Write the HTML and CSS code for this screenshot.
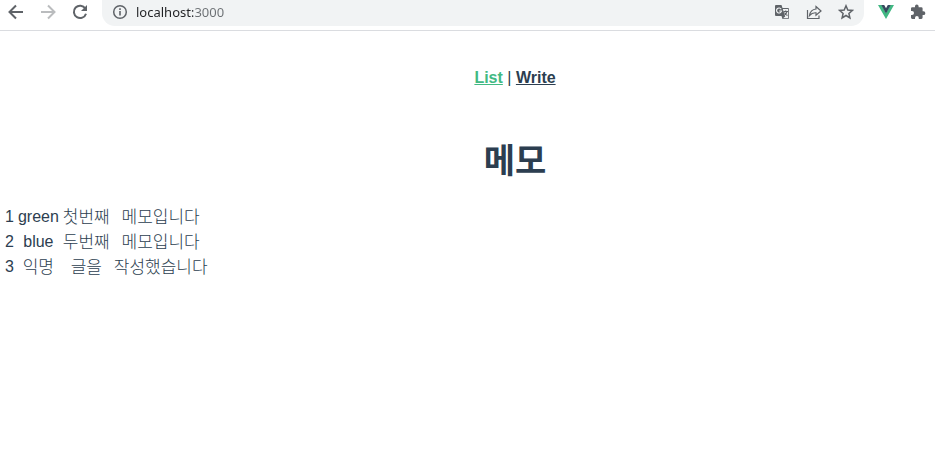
FILE: index.html
```html
<!DOCTYPE html>
<html lang="ko">
<head>
<meta charset="utf-8">
<title>메모</title>
<link rel="stylesheet" href="styles.css">
</head>
<body>
<header class="toolbar">
  <button class="tool" aria-label="Back"><svg viewBox="0 0 16 16"><path class="line" d="M15 8H2M8 1.500L1.500 8L8 14.500"/></svg></button>
  <button class="tool faded" aria-label="Forward"><svg viewBox="0 0 16 16"><path class="line" d="M1 8H14M8 1.500L14.500 8L8 14.500"/></svg></button>
  <button class="tool" aria-label="Reload"><svg viewBox="0 0 16 16"><path class="line" d="M13.300 4.500A6.200 6.200 0 1 0 14 9.700"/><path d="M15 1V7H9Z"/></svg></button>
  <div class="address">
    <button class="tool info" aria-label="Site information"><svg viewBox="0 0 16 16"><circle class="thin" cx="8" cy="8" r="6.300"/><path d="M7.200 7h1.600v4.500H7.200zM7.200 4.300h1.600v1.600H7.200z"/></svg></button>
    <input class="url" type="text" aria-label="Address" value="localhost:3000">
    <button class="tool" aria-label="Translate"><svg viewBox="0 0 16 16"><path d="M2 1h5.500l1 3H14q1 0 1 1v9q0 1-1 1H8.500l-1-3H2q-1 0-1-1V2q0-1 1-1zM8.800 5l2.400 7.500L9 14.200h5.200V5z" fill-rule="evenodd"/><path class="cut" d="M7.200 5.200A2.500 2.500 0 1 0 7.500 7H5.200"/><path class="hair" d="M9.500 7.500H14M11.700 6.500v1M13 7.500Q12.500 10 10.500 11M10.500 8.500Q11.500 10.500 13.500 11.500"/></svg></button>
    <button class="tool" aria-label="Share"><svg viewBox="0 0 16 16"><path class="hair" d="M1.500 6V14.500H13V11.500M10 2.500L15 7L10 11.200V8.800Q6 8.500 3.500 11.500Q4.500 5.500 10 5Z"/></svg></button>
    <button class="tool" aria-label="Bookmark"><svg viewBox="0 0 16 16"><path class="thin" d="M8 1.800L9.800 6L14.300 6.400L10.900 9.400L11.900 13.900L8 11.500L4.100 13.900L5.100 9.400L1.700 6.400L6.200 6Z"/></svg></button>
  </div>
  <button class="tool" aria-label="Vue devtools"><svg viewBox="0 0 16 16"><path class="vue" d="M0 1H3.500L8 9L12.500 1H16L8 15Z"/><path class="navy" d="M3.200 1H6.200L8 4.200L9.800 1H12.800L8 9.500Z"/></svg></button>
  <button class="tool" aria-label="Extensions"><svg viewBox="0 0 16 16"><path d="M13.500 7.300H12.600V4.500q0-1.300-1.300-1.300H8.600V2.300a1.800 1.800 0 0 0-3.600 0V3.200H2.300Q1 3.200 1 4.500V7H2a2 2 0 0 1 0 4H1v2.600Q1 15 2.300 15H5v-1a1.900 1.900 0 0 1 3.800 0v1h2.500q1.300 0 1.300-1.400V11h.9a1.800 1.800 0 0 0 0-3.700z"/></svg></button>
</header>
<div class="app">
  <nav class="nav"><a class="active" href="#list">List</a> | <a href="#write">Write</a></nav>
  <main>
    <h1>메모</h1>
    <table class="memos">
      <tbody>
        <tr><td>1</td><td>green</td><td class="korean">첫번째</td><td class="korean">메모입니다</td></tr>
        <tr><td>2</td><td>blue</td><td class="korean">두번째</td><td class="korean">메모입니다</td></tr>
        <tr><td>3</td><td class="korean">익명</td><td class="korean">글을</td><td class="korean">작성했습니다</td></tr>
      </tbody>
    </table>
  </main>
</div>
</body>
</html>
```
FILE: styles.css
```css
* { box-sizing: border-box; }

body {
  margin: 0;
  background: #fff;
  color: #2c3e50;
  font: 16px/18px "Liberation Sans", "Noto Sans CJK KR", sans-serif;
}

.toolbar {
  display: flex;
  align-items: flex-start;
  gap: 16px;
  height: 31px;
  padding: 0 9px 0 8px;
  border-bottom: 1px solid #dadce0;
}

.tool {
  flex: none;
  width: 16px;
  height: 16px;
  margin: 4px 0 0;
  padding: 0;
  border: 0;
  background: none;
  color: #5f6368;
}

.tool svg { display: block; width: 16px; height: 16px; fill: currentColor; }
.tool .line, .tool .thin, .tool .hair { fill: none; stroke: currentColor; stroke-width: 2; }
.tool .thin { stroke-width: 1.5; }
.tool .hair { stroke-width: 1.2; }
.tool .cut { fill: none; stroke: #f1f3f4; stroke-width: 1.2; }
.tool .vue { fill: #41b883; }
.tool .navy { fill: #35495e; }
.tool.faded { color: #babcbe; }

.address {
  display: flex;
  flex: 1;
  gap: 16px;
  height: 26px;
  margin: 0 -2px;
  padding: 0 10px;
  border-radius: 0 0 13px 13px;
  background: #f1f3f4;
}

.info { margin-right: -8px; }

.url {
  flex: 1;
  min-width: 0;
  height: 24px;
  padding: 0;
  border: 0;
  outline: 0;
  background: linear-gradient(90deg, #202124 57px, #6b6f73 57px);
  background-clip: text;
  color: transparent;
  font: 13px/24px "Noto Sans", sans-serif;
}

.nav, h1 { padding-left: 95px; text-align: center; }

.nav { padding-top: 38px; padding-bottom: 30px; }
.nav a { color: #2c3e50; font-weight: bold; }
.nav .active { color: #42b983; }

h1 { margin: 23px 0 21px; font-size: 34px; line-height: 42px; }

.memos { margin-left: 2px; border-spacing: 2px; text-align: center; }
.memos td { height: 23px; padding: 1px; line-height: 20px; }
.memos .korean { padding-top: 2px; padding-bottom: 0; font-size: 17px; font-weight: 300; }
```
